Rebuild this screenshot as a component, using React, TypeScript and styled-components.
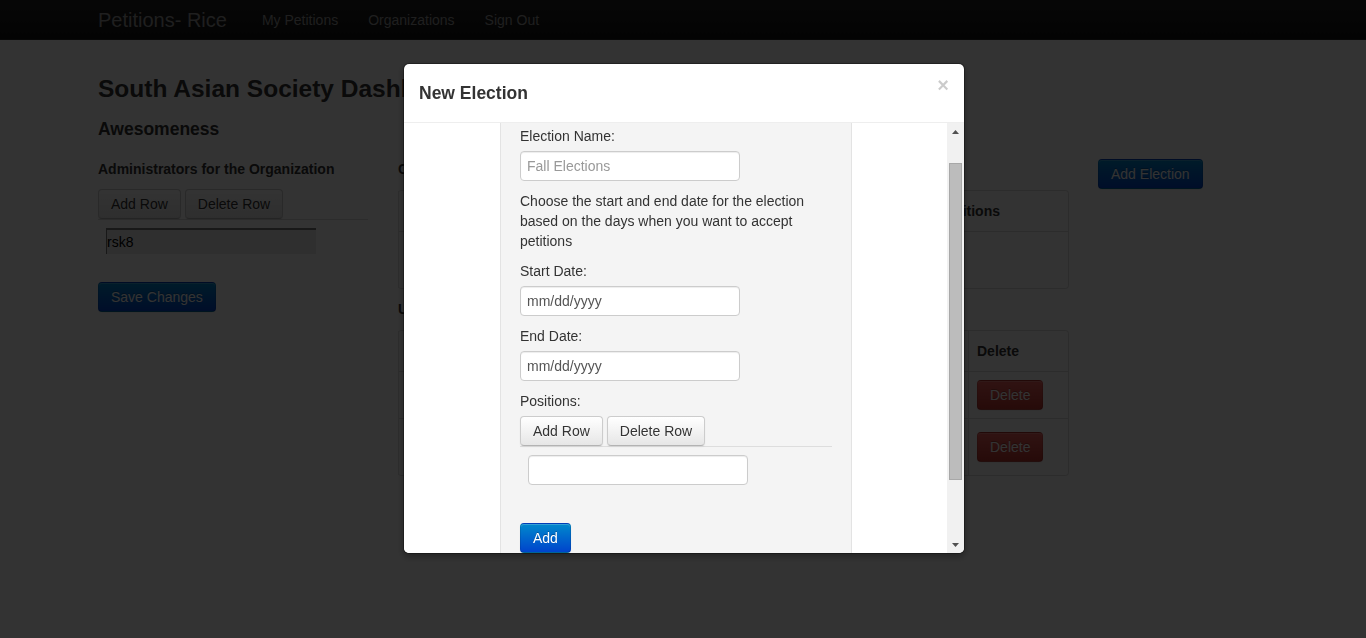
import React from "react";
import styled, { createGlobalStyle, css } from "styled-components";

const GlobalStyle = createGlobalStyle`
  html, body { margin: 0; padding: 0; }
  body {
    background: #fff;
    font-family: "Liberation Sans", Arial, Helvetica, sans-serif;
    font-size: 14px;
    line-height: 20px;
    color: #333;
  }
  *, *::before, *::after { box-sizing: border-box; }
`;

/* ---------- navbar ---------- */
const NavBar = styled.header`
  height: 40px;
  background: linear-gradient(to bottom, #222, #111);
  border-bottom: 1px solid #252525;
`;
const NavInner = styled.nav`
  width: 1170px;
  margin: 0 auto;
  display: flex;
  align-items: flex-start;
`;
const Brand = styled.a`
  display: block;
  padding: 10px 20px;
  margin-left: -20px;
  font-size: 20px;
  line-height: 20px;
  color: #999;
  text-decoration: none;
`;
const NavLink = styled.a`
  display: block;
  padding: 10px 15px;
  font-size: 14px;
  line-height: 20px;
  color: #999;
  text-decoration: none;
`;

/* ---------- page ---------- */
const Container = styled.main`
  width: 1170px;
  margin: 0 auto;
  padding-top: 19px;
`;
const PageTitle = styled.h3`
  margin: 10px 0;
  font-size: 24.5px;
  line-height: 40px;
  font-weight: bold;
`;
const SubTitle = styled.h4`
  margin: 10px 0;
  font-size: 17.5px;
  line-height: 20px;
  font-weight: bold;
`;
const Row = styled.div`
  display: flex;
  gap: 30px;
  align-items: flex-start;
`;
const Column = styled.section<{ $span: number }>`
  flex: none;
  width: ${(p) => p.$span * 70 + (p.$span - 1) * 30}px;
`;
const SectionHeading = styled.h5<{ $mb?: number }>`
  margin: 10px 0 ${(p) => p.$mb ?? 10}px;
  font-size: 14px;
  line-height: 20px;
  font-weight: bold;
`;

/* ---------- buttons ---------- */
type Variant = "default" | "primary" | "danger";
const variants: Record<Variant, ReturnType<typeof css>> = {
  default: css`
    color: #333;
    text-shadow: 0 1px 1px rgba(255, 255, 255, 0.75);
    background: linear-gradient(to bottom, #fff, #e6e6e6);
    border-color: #ccc #ccc #b3b3b3;
  `,
  primary: css`
    color: #fff;
    text-shadow: 0 -1px 0 rgba(0, 0, 0, 0.25);
    background: linear-gradient(to bottom, #08c, #04c);
    border-color: rgba(0, 0, 0, 0.1) rgba(0, 0, 0, 0.1) rgba(0, 0, 0, 0.25);
  `,
  danger: css`
    color: #fff;
    text-shadow: 0 -1px 0 rgba(0, 0, 0, 0.25);
    background: linear-gradient(to bottom, #ee5f5b, #bd362f);
    border-color: rgba(0, 0, 0, 0.1) rgba(0, 0, 0, 0.1) rgba(0, 0, 0, 0.25);
  `,
};
const Button = styled.button<{ $variant?: Variant; $mt?: number }>`
  display: inline-block;
  margin: ${(p) => p.$mt ?? 0}px 0 0;
  padding: 4px 12px;
  font-family: inherit;
  font-size: 14px;
  line-height: 20px;
  border: 1px solid;
  border-radius: 4px;
  box-shadow: inset 0 1px 0 rgba(255, 255, 255, 0.2), 0 1px 2px rgba(0, 0, 0, 0.05);
  cursor: pointer;
  ${(p) => variants[p.$variant ?? "default"]}
`;
const ButtonBar = styled.div`
  display: flex;
  gap: 4px;
`;

/* ---------- tables ---------- */
const Table = styled.table<{ $bordered?: boolean; $mb?: number }>`
  width: 100%;
  table-layout: fixed;
  border-spacing: 0;
  border-collapse: separate;
  margin-bottom: ${(p) => p.$mb ?? 20}px;
  ${(p) =>
    p.$bordered &&
    css`
      border: 1px solid #ddd;
      border-left: 0;
      border-radius: 4px;
    `}
`;
const Col = styled.col<{ $w: number }>`
  width: ${(p) => p.$w}px;
`;
const Th = styled.th`
  height: 40px;
  padding: 10px 8px;
  text-align: left;
  font-weight: bold;
  line-height: 20px;
  vertical-align: bottom;
  border-left: 1px solid #ddd;
`;
const Td = styled.td<{ $bordered?: boolean; $h?: number }>`
  padding: 8px;
  line-height: 20px;
  vertical-align: middle;
  border-top: 1px solid #ddd;
  ${(p) => p.$bordered && css`border-left: 1px solid #ddd;`}
  ${(p) => p.$h && css`height: ${p.$h}px;`}
`;

/* ---------- inputs ---------- */
const TextInput = styled.input<{ $ph?: string }>`
  display: block;
  width: 220px;
  height: 30px;
  margin: 0;
  padding: 4px 6px;
  font-family: inherit;
  font-size: 14px;
  line-height: 20px;
  color: #555;
  background: #fff;
  border: 1px solid #ccc;
  border-radius: 4px;
  box-shadow: inset 0 1px 1px rgba(0, 0, 0, 0.075);
  &::placeholder {
    color: ${(p) => p.$ph ?? "#999"};
    opacity: 1;
  }
`;
const PlainInput = styled.input`
  display: block;
  width: 210px;
  height: 26px;
  margin: 0;
  padding: 0;
  font-family: inherit;
  font-size: 14px;
  color: #000;
  background: #ebebeb;
  border: 0;
  border-top: 2px solid #7b7b7b;
  border-left: 1px solid #7b7b7b;
`;

/* ---------- modal ---------- */
const Backdrop = styled.div`
  position: fixed;
  inset: 0;
  background: rgba(0, 0, 0, 0.8);
  z-index: 1040;
`;
const Modal = styled.div`
  position: fixed;
  top: 63px;
  left: 50%;
  margin-left: -280px;
  width: 562px;
  z-index: 1050;
  background: #fff;
  background-clip: padding-box;
  border: 1px solid rgba(0, 0, 0, 0.3);
  border-radius: 6px;
  box-shadow: 0 3px 7px rgba(0, 0, 0, 0.3);
  overflow: hidden;
`;
const ModalHeader = styled.div`
  display: flex;
  align-items: center;
  justify-content: space-between;
  height: 59px;
  padding: 0 15px;
  border-bottom: 1px solid #eee;
`;
const ModalTitle = styled.h4`
  margin: 0;
  font-size: 17.5px;
  line-height: 20px;
  font-weight: bold;
  color: #333;
`;
const CloseButton = styled.button`
  align-self: flex-start;
  margin-top: 11px;
  padding: 0;
  background: transparent;
  border: 0;
  font-family: inherit;
  font-size: 20px;
  font-weight: bold;
  line-height: 20px;
  color: #000;
  opacity: 0.2;
  cursor: pointer;
`;
const ModalBody = styled.div`
  display: flex;
  height: 430px;
`;
const Gutter = styled.div<{ $w: number }>`
  flex: none;
  width: ${(p) => p.$w}px;
  background: #fff;
`;
const FormColumn = styled.div`
  flex: none;
  width: 352px;
  padding: 3px 19px 0;
  background: #f4f4f4;
  border-left: 1px solid #e3e3e3;
  border-right: 1px solid #e3e3e3;
  overflow: hidden;
`;
const FieldLabel = styled.label`
  display: block;
  margin-bottom: 5px;
`;
const Field = styled.div`
  margin-bottom: 10px;
`;
const HelpText = styled.p`
  margin: 0 0 10px;
`;
const ScrollBar = styled.div`
  flex: none;
  width: 17px;
  display: flex;
  flex-direction: column;
  background: #f1f1f1;
`;
const ScrollArrow = styled.div`
  height: 17px;
  display: flex;
  align-items: center;
  justify-content: center;
`;
const ScrollTrack = styled.div`
  flex: 1;
  padding: 23px 2px 0;
`;
const ScrollThumb = styled.div`
  height: 317px;
  background: #bcbcbc;
  border: 1px solid #a8a8a8;
`;

const Arrow = ({ down }: { down?: boolean }) => (
  <svg width="7" height="4" viewBox="0 0 7 4">
    <polygon points={down ? "0,0 7,0 3.5,4" : "0,4 3.5,0 7,4"} fill="#505050" />
  </svg>
);

export default function App() {
  return (
    <>
      <GlobalStyle />
      <NavBar>
        <NavInner>
          <Brand href="#">Petitions- Rice</Brand>
          <NavLink href="#">My Petitions</NavLink>
          <NavLink href="#">Organizations</NavLink>
          <NavLink href="#">Sign Out</NavLink>
        </NavInner>
      </NavBar>

      <Container>
        <PageTitle>South Asian Society Dashboard</PageTitle>
        <SubTitle>Awesomeness</SubTitle>
        <Row>
          <Column $span={3}>
            <SectionHeading>Administrators for the Organization</SectionHeading>
            <ButtonBar>
              <Button>Add Row</Button>
              <Button>Delete Row</Button>
            </ButtonBar>
            <Table>
              <tbody>
                <tr>
                  <Td>
                    <PlainInput defaultValue="rsk8" />
                  </Td>
                </tr>
              </tbody>
            </Table>
            <Button $variant="primary">Save Changes</Button>
          </Column>

          <Column $span={7}>
            <SectionHeading $mb={11}>Current Elections</SectionHeading>
            <Table $bordered $mb={0}>
              <colgroup>
                <Col $w={180} />
                <Col $w={175} />
                <Col $w={175} />
                <Col $w={140} />
              </colgroup>
              <thead>
                <tr>
                  <Th />
                  <Th />
                  <Th />
                  <Th>Positions</Th>
                </tr>
              </thead>
              <tbody>
                <tr>
                  <Td $bordered $h={57} />
                  <Td $bordered />
                  <Td $bordered />
                  <Td $bordered />
                </tr>
              </tbody>
            </Table>
            <SectionHeading $mb={11}>Upcoming Elections</SectionHeading>
            <Table $bordered $mb={0}>
              <colgroup>
                <Col $w={190} />
                <Col $w={190} />
                <Col $w={190} />
                <Col $w={100} />
              </colgroup>
              <thead>
                <tr>
                  <Th />
                  <Th />
                  <Th />
                  <Th>Delete</Th>
                </tr>
              </thead>
              <tbody>
                <tr>
                  <Td $bordered />
                  <Td $bordered />
                  <Td $bordered />
                  <Td $bordered>
                    <Button $variant="danger">Delete</Button>
                  </Td>
                </tr>
                <tr>
                  <Td $bordered $h={57} />
                  <Td $bordered />
                  <Td $bordered />
                  <Td $bordered>
                    <Button $variant="danger">Delete</Button>
                  </Td>
                </tr>
              </tbody>
            </Table>
          </Column>

          <Column $span={2}>
            <Button $variant="primary" $mt={10}>
              Add Election
            </Button>
          </Column>
        </Row>
      </Container>

      <Backdrop />
      <Modal>
        <ModalHeader>
          <ModalTitle>New Election</ModalTitle>
          <CloseButton>×</CloseButton>
        </ModalHeader>
        <ModalBody>
          <Gutter $w={96} />
          <FormColumn>
            <FieldLabel>Election Name:</FieldLabel>
            <Field>
              <TextInput placeholder="Fall Elections" />
            </Field>
            <HelpText>
              Choose the start and end date for the election based on the days when you want to accept
              petitions
            </HelpText>
            <FieldLabel>Start Date:</FieldLabel>
            <Field>
              <TextInput placeholder="mm/dd/yyyy" $ph="#555" />
            </Field>
            <FieldLabel>End Date:</FieldLabel>
            <Field>
              <TextInput placeholder="mm/dd/yyyy" $ph="#555" />
            </Field>
            <FieldLabel>Positions:</FieldLabel>
            <ButtonBar>
              <Button>Add Row</Button>
              <Button>Delete Row</Button>
            </ButtonBar>
            <Table $mb={30}>
              <tbody>
                <tr>
                  <Td>
                    <TextInput />
                  </Td>
                </tr>
              </tbody>
            </Table>
            <Button $variant="primary">Add</Button>
          </FormColumn>
          <Gutter $w={95} />
          <ScrollBar>
            <ScrollArrow>
              <Arrow />
            </ScrollArrow>
            <ScrollTrack>
              <ScrollThumb />
            </ScrollTrack>
            <ScrollArrow>
              <Arrow down />
            </ScrollArrow>
          </ScrollBar>
        </ModalBody>
      </Modal>
    </>
  );
}
